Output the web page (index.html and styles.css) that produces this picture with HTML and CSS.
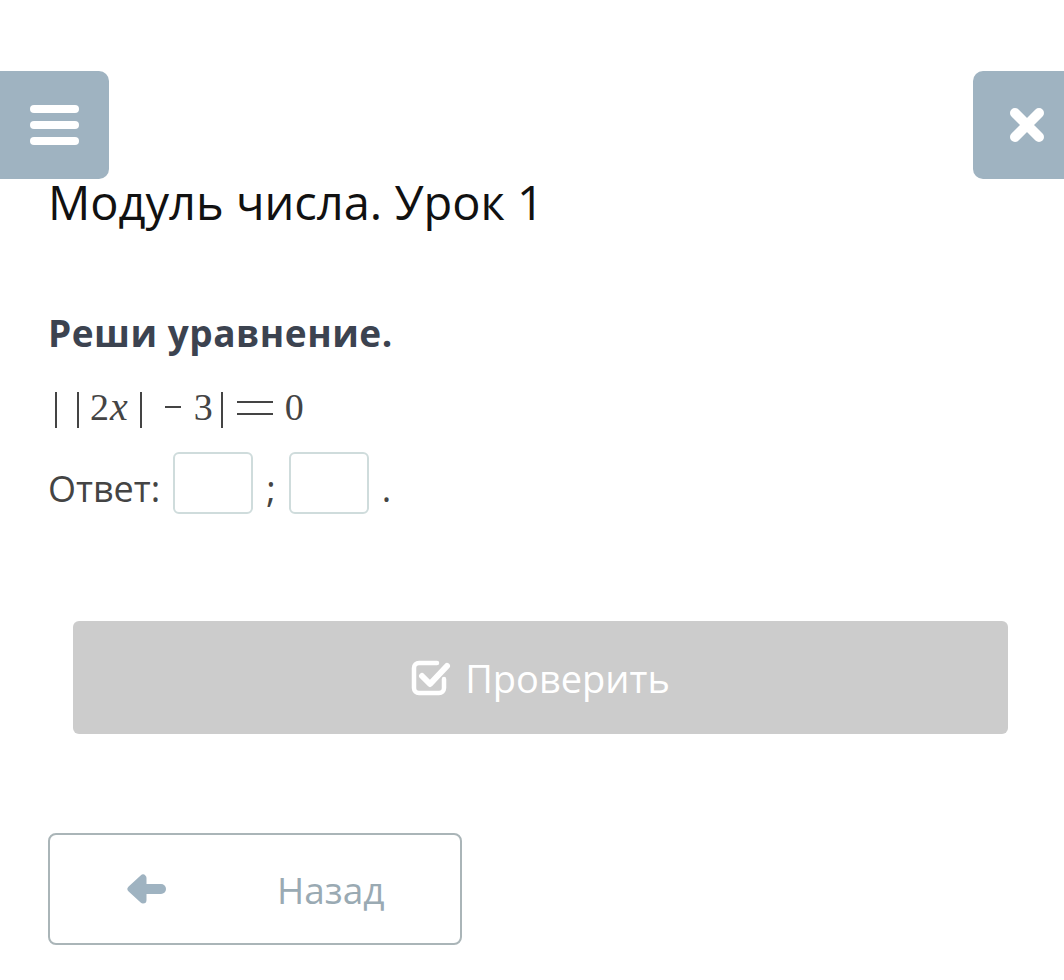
FILE: index.html
```html
<!DOCTYPE html>
<html lang="ru">
<head>
    <meta charset="UTF-8">
    <title>Модуль числа. Урок 1</title>
    <link rel="stylesheet" href="styles.css">
</head>
<body>
    <div class="topbar">
        <button class="menu-btn" type="button" aria-label="Меню">
            <span></span><span></span><span></span>
        </button>
        <button class="close-btn" type="button" aria-label="Закрыть">
            <svg width="42" height="42" viewBox="0 0 42 42">
                <path d="M9 9 L33 33 M33 9 L9 33" stroke="#fff" stroke-width="10" stroke-linecap="round"/>
            </svg>
        </button>
    </div>

    <div class="lesson">
        <h1>Модуль числа. Урок 1</h1>

        <h2>Реши уравнение.</h2>

        <!-- ||2x| - 3| = 0 -->
        <div class="formula">
            <span class="bar m7"></span>
            <span class="bar m20"></span>
            <span class="num m11">2</span>
            <i class="num m1">x</i>
            <span class="bar m12"></span>
            <span class="minus m23"></span>
            <span class="num m13">3</span>
            <span class="bar m8"></span>
            <span class="eq m14"></span>
            <span class="num m12">0</span>
        </div>

        <div class="answer">
            <span class="txt">Ответ:</span>
            <input type="text" class="answer-box">
            <span class="txt">;</span>
            <input type="text" class="answer-box">
            <span class="txt">.</span>
        </div>

        <button class="check-btn" type="button">
            <svg width="40" height="36" viewBox="0 0 40 36">
                <path d="M33 19 V28 a5 5 0 0 1 -5 5 H8 a5 5 0 0 1 -5 -5 V8 a5 5 0 0 1 5 -5 H26" fill="none" stroke="#fff" stroke-width="4.5" stroke-linecap="round"/>
                <path d="M11 16 L19 24 L36 6" fill="none" stroke="#fff" stroke-width="6" stroke-linecap="round" stroke-linejoin="round"/>
            </svg>
            Проверить
        </button>

        <button class="back-btn" type="button">
            <svg width="40" height="30" viewBox="0 0 40 30">
                <path d="M5 15 L17 4 L17 26 Z" fill="#9fb3c1" stroke="#9fb3c1" stroke-width="7" stroke-linejoin="round"/>
                <path d="M12 15 H35" stroke="#9fb3c1" stroke-width="10" stroke-linecap="round"/>
            </svg>
            <span>Назад</span>
        </button>
    </div>
</body>
</html>
```

FILE: styles.css
```css
/* Общие стили */
body {
    font-family: 'Open Sans', 'Noto Sans', sans-serif;
    background-color: #ffffff;
    margin: 0;
    padding: 0;
}

/* Верхняя панель */
.topbar {
    display: flex;
    justify-content: space-between;
    margin-top: 71px;
    height: 108px;
}

.menu-btn,
.close-btn {
    border: none;
    background-color: #9fb3c1;
    cursor: pointer;
    padding: 0;
    display: flex;
    align-items: center;
}

.menu-btn {
    width: 109px;
    border-radius: 0 10px 10px 0;
    flex-direction: column;
    justify-content: center;
    gap: 8px;
    padding-left: 30px;
    padding-right: 30px;
}

.menu-btn span {
    display: block;
    width: 49px;
    height: 8px;
    border-radius: 4px;
    background-color: #fff;
}

.close-btn {
    width: 91px;
    border-radius: 10px 0 0 10px;
    padding-left: 33px;
}

/* Урок */
.lesson {
    padding: 0 56px 0 48px;
}

h1 {
    font-size: 47px;
    font-weight: 400;
    line-height: 47px;
    color: #111;
    margin: 0 0 87px;
}

h2 {
    font-size: 37px;
    font-weight: 700;
    letter-spacing: 0.5px;
    line-height: 40px;
    color: #3c4350;
    margin: 0 0 33px;
}

/* Формула */
.formula {
    display: flex;
    align-items: center;
    height: 48px;
    font-family: 'Liberation Serif', 'DejaVu Serif', serif;
    font-size: 38px;
    color: #444;
}

.formula .num {
    line-height: 38px;
    margin-bottom: 6px;
}

.formula i {
    font-style: italic;
    font-size: 40px;
}

.formula .bar {
    display: block;
    width: 2px;
    height: 36px;
    background-color: #444;
}

.formula .minus {
    display: block;
    width: 16px;
    height: 2px;
    margin-bottom: 6px;
    background-color: #444;
}

.formula .eq {
    display: block;
    width: 36px;
    height: 10px;
    margin-bottom: 4px;
    border-top: 2px solid #444;
    border-bottom: 2px solid #444;
}

.m1 { margin-left: 1px; }
.m7 { margin-left: 7px; }
.m8 { margin-left: 8px; }
.m11 { margin-left: 11px; }
.m12 { margin-left: 12px; }
.m13 { margin-left: 13px; }
.m14 { margin-left: 14px; }
.m20 { margin-left: 20px; }
.m23 { margin-left: 23px; }

/* Ответ */
.answer {
    display: flex;
    align-items: center;
    gap: 13px;
    margin-top: 18px;
    font-size: 36px;
    color: #444;
}

.answer .txt {
    line-height: 36px;
    padding-top: 12px;
}

.answer-box {
    width: 80px;
    height: 62px;
    box-sizing: border-box;
    border: 2px solid #cfdcdc;
    border-radius: 6px;
    font-size: 30px;
    outline: none;
}

/* Кнопка проверки */
.check-btn {
    display: flex;
    align-items: center;
    justify-content: center;
    gap: 14px;
    width: calc(100% - 25px);
    height: 113px;
    margin: 107px 0 0 25px;
    background-color: #cccccc;
    border: none;
    border-radius: 6px;
    color: #fff;
    font-family: inherit;
    font-size: 38px;
    cursor: pointer;
}

/* Кнопка назад */
.back-btn {
    display: flex;
    align-items: center;
    width: 414px;
    height: 112px;
    margin-top: 99px;
    padding: 0 0 0 76px;
    background-color: #fff;
    border: 2px solid #aab5b8;
    border-radius: 8px;
    font-family: inherit;
    font-size: 37px;
    color: #9aaab3;
    cursor: pointer;
}

.back-btn span {
    margin-left: 111px;
}
```
